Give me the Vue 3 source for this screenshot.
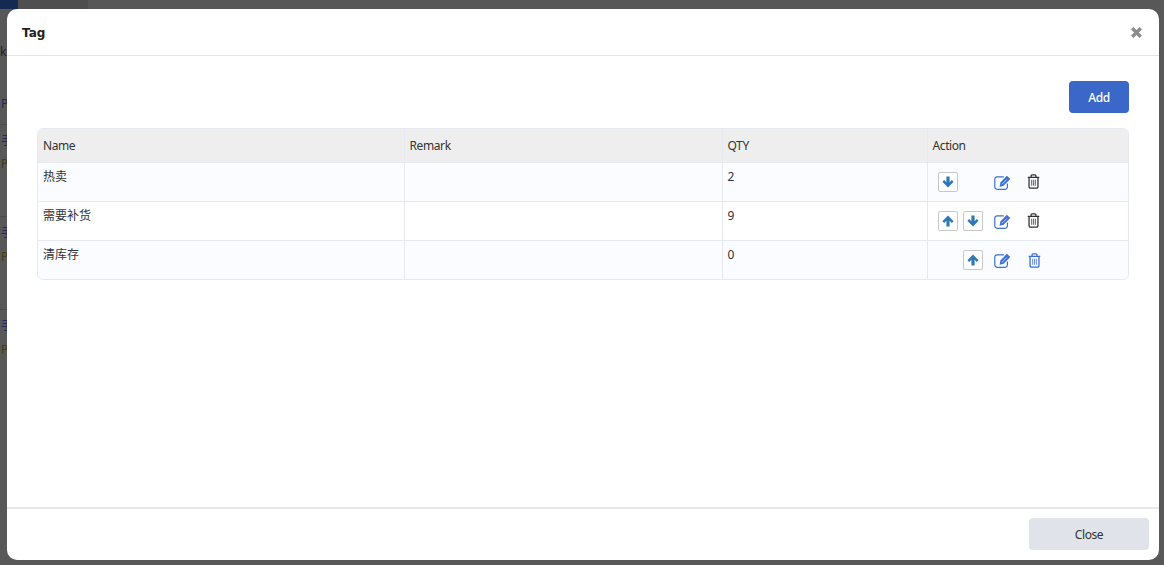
<script setup>
const rows = [
  { id: 'a', name: '热卖', qty: 2, left: 'down', right: '', blue: false },
  { id: 'b', name: '需要补货', qty: 9, left: 'up', right: 'down', blue: false },
  { id: 'c', name: '清库存', qty: 0, left: '', right: 'up', blue: true },
]
const arrows = {
  up: 'M6 .6 11.6 6.2 9.8 8 7.6 5.8V11.4H4.4V5.8L2.2 8 .4 6.2z',
  down: 'M6 11.4.4 5.8 2.2 4 4.4 6.2V.6H7.6V6.2L9.8 4 11.6 5.8z',
}
</script>

<template>
  <div class="page">
    <div class="backdrop" aria-hidden="true">
      <i class="scrap navy"></i>
      <i class="scrap tab"></i>
      <span class="bg-text k">k</span>
      <span class="bg-text p1">P</span>
      <span class="bg-text z z1">手</span>
      <span class="bg-text o o1">P</span>
      <span class="bg-text z z2">手</span>
      <span class="bg-text o o2">P</span>
      <span class="bg-text z z3">手</span>
      <span class="bg-text o o3">P</span>
      <i class="rule r1"></i>
      <i class="rule r2"></i>
      <i class="rule r3"></i>
    </div>
    <section class="modal">
      <header class="head">
        <h3>Tag</h3>
        <svg class="x" viewBox="0 0 12 12" width="13" height="13">
          <path d="M1.2 3.2 3.2 1.2 6 4l2.8-2.8 2 2L8 6l2.8 2.8-2 2L6 8l-2.8 2.8-2-2L4 6z" fill="#8c8c8c" stroke="#8c8c8c" stroke-width=".6" stroke-linejoin="round" />
        </svg>
      </header>
      <main class="body">
        <div class="bar"><button class="add">Add</button></div>
        <div class="tablewrap">
          <table>
            <colgroup>
              <col class="c1" /><col class="c2" /><col class="c3" /><col />
            </colgroup>
            <thead>
              <tr><th>Name</th><th>Remark</th><th>QTY</th><th>Action</th></tr>
            </thead>
            <tbody>
              <tr v-for="r in rows" :key="r.id">
                <td>{{ r.name }}</td>
                <td></td>
                <td>{{ r.qty }}</td>
                <td class="act">
                  <div class="tools">
                    <span class="slot">
                      <span v-if="r.left" class="mv">
                        <svg viewBox="0 0 12 12" width="12" height="12"><path :d="arrows[r.left]" fill="#2f78b8" /></svg>
                      </span>
                    </span>
                    <span class="slot">
                      <span v-if="r.right" class="mv">
                        <svg viewBox="0 0 12 12" width="12" height="12"><path :d="arrows[r.right]" fill="#2f78b8" /></svg>
                      </span>
                    </span>
                    <svg class="edit" viewBox="0 0 17 15" width="17" height="15">
                      <path d="M9.8 1.9H3a2.2 2.2 0 0 0-2.2 2.2v8a2.2 2.2 0 0 0 2.2 2.2h8.2a2.2 2.2 0 0 0 2.2-2.2V8.4" fill="none" stroke="#3d6fd1" stroke-width="1.2" />
                      <path d="M6.4 7.6 12.8.8 16.3 4 9.6 10.8 5.6 11.8z" fill="#3d6fd1" />
                      <path d="M7.8 9.4 12.8 4.4" fill="none" stroke="#bcd0f2" stroke-width="1" />
                    </svg>
                    <svg class="trash" :class="{ blue: r.blue }" viewBox="0 0 14 16" width="13" height="15">
                      <path d="M.8 3.6H13.2M4.4 3.4V1.9a1 1 0 0 1 1-1h3.2a1 1 0 0 1 1 1v1.5" fill="none" stroke="currentColor" stroke-width="1.4" />
                      <path d="M2.2 3.8V13.6a1.5 1.5 0 0 0 1.5 1.5h6.6a1.5 1.5 0 0 0 1.5-1.5V3.8" fill="none" stroke="currentColor" stroke-width="1.4" />
                      <path d="M5 6v6.6M7 6v6.6M9 6v6.6" fill="none" stroke="currentColor" stroke-width="1.2" opacity=".7" />
                    </svg>
                  </div>
                </td>
              </tr>
            </tbody>
          </table>
        </div>
      </main>
      <footer class="foot"><button class="close">Close</button></footer>
    </section>
  </div>
</template>

<style>
html, body { margin: 0; overflow: hidden; }
</style>

<style scoped>
.page {
  position: relative;
  width: 1164px;
  height: 565px;
  padding: 9px 5px 5px 7px;
  box-sizing: border-box;
  background: #585858;
  overflow: hidden;
  font-family: "Noto Sans", "Noto Sans CJK SC", sans-serif;
  font-size: 12px;
  color: #333;
}
.backdrop { position: absolute; inset: 0; }
.scrap { position: absolute; top: 0; height: 9px; }
.navy { left: 0; width: 18px; background: #152a52; }
.tab { left: 18px; width: 70px; background: #4f4f4f; }
.bg-text { position: absolute; left: 1px; font-size: 12px; line-height: 14px; }
.k { top: 45px; color: #222; left: 0; }
.p1 { top: 97px; color: #1e2a66; }
.z { color: #1e2a66; }
.o { color: #3f3f10; }
.z1 { top: 134px; } .o1 { top: 157px; }
.z2 { top: 226px; } .o2 { top: 250px; }
.z3 { top: 319px; } .o3 { top: 343px; }
.rule { position: absolute; left: 0; width: 7px; height: 1px; background: #4c4c4c; }
.r1 { top: 124px; } .r2 { top: 216px; } .r3 { top: 309px; }

.modal {
  position: relative;
  width: 1152px;
  height: 551px;
  background: #fff;
  border-radius: 10px;
  display: flex;
  flex-direction: column;
  overflow: hidden;
}
.head {
  height: 46px;
  flex: none;
  border-bottom: 1px solid #e5e5e5;
  display: flex;
  align-items: center;
  justify-content: space-between;
  padding: 0 16px 0 15px;
}
h3 {
  margin: 1px 0 0;
  font-family: "DejaVu Sans", sans-serif;
  font-size: 12px;
  line-height: 18px;
  font-weight: 700;
  color: #222;
}
.x { display: block; margin-top: 1px; }
.body {
  flex: 1;
  padding: 25px 30px 0;
  min-height: 0;
}
.bar { display: flex; justify-content: flex-end; }
.add {
  width: 60px;
  height: 32px;
  background: #3a67c8;
  color: #fff;
  border: 0;
  border-radius: 4px;
  font: 500 12px "Noto Sans", sans-serif;
  letter-spacing: -.4px;
  padding: 0;
}
.tablewrap {
  margin-top: 15px;
  border: 1px solid #e6e9ef;
  border-radius: 6px;
  overflow: hidden;
}
table {
  width: 100%;
  border-collapse: collapse;
  table-layout: fixed;
}
.c1 { width: 366px; }
.c2 { width: 318px; }
.c3 { width: 205px; }
th {
  height: 33px;
  box-sizing: border-box;
  background: #eeeeee;
  font-weight: 400;
  letter-spacing: -.4px;
  text-align: left;
  padding: 0 5px;
  color: #333;
  border-left: 1px solid #e6e9ef;
}
td {
  height: 39px;
  box-sizing: border-box;
  padding: 5px 5px 0;
  vertical-align: top;
  line-height: 18px;
  background: #fff;
  border-left: 1px solid #e6e9ef;
  border-top: 1px solid #e6e9ef;
}
th:first-child, td:first-child { border-left: 0; }
tbody tr:nth-child(odd) td { background: #fafcff; }
td.act { padding: 0 0 0 10px; }
.tools {
  display: flex;
  align-items: center;
  height: 38px;
}
.slot { width: 20px; margin-right: 5px; height: 20px; flex: none; }
.mv {
  width: 20px;
  height: 20px;
  box-sizing: border-box;
  border: 1px solid #c8c8c8;
  border-radius: 2px;
  background: #fff;
  display: flex;
  align-items: center;
  justify-content: center;
}
.edit { margin-left: 6px; flex: none; margin-top: 1px; }
.trash { margin-left: 16px; flex: none; color: #333; }
.trash.blue { color: #3d6fd1; margin-left: 17px; margin-top: 2px; }
.foot {
  height: 53px;
  flex: none;
  box-sizing: border-box;
  border-top: 2px solid #e8e8e8;
  display: flex;
  justify-content: flex-end;
  align-items: flex-start;
  padding: 9px 10px 0 0;
}
.close {
  width: 120px;
  height: 32px;
  border: 0;
  border-radius: 4px;
  background: #e0e4ea;
  color: #333;
  font: 400 12px "Noto Sans", sans-serif;
  letter-spacing: -.4px;
  padding: 0;
}
</style>
